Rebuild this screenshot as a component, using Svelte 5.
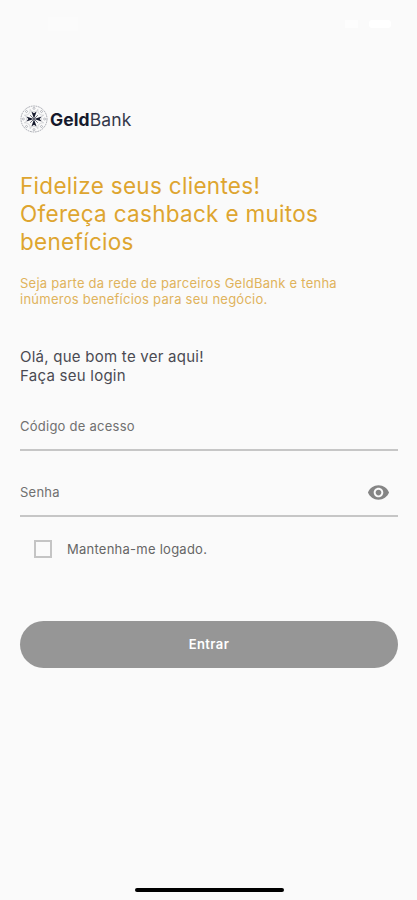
<script>
  let code = $state('');
  let password = $state('');
  let visible = $state(false);
  let remember = $state(false);
</script>

<main class="screen">
  <div class="status" aria-hidden="true">
    <span class="clock"></span>
    <span class="signals"><i class="wifi"></i><i class="battery"></i></span>
  </div>

  <header class="brand">
    <svg class="emblem" viewBox="0 0 28 28" aria-hidden="true">
      <g fill="none" stroke="#5a5f6c" stroke-width="0.5">
        <circle cx="14" cy="14" r="13" stroke-dasharray="1.8 0.7" />
        {#each [0, 45, 90, 135, 180, 225, 270, 315] as angle}
          <circle cx="14" cy="3.4" r="1" opacity="0.7" transform="rotate({angle} 14 14)" />
          <path d="M9.8 4.5Q14 9 18.2 4.5" opacity="0.4" transform="rotate({angle} 14 14)" />
        {/each}
      </g>
      <g fill="#15192c">
        {#each [0, 90, 180, 270] as angle}
          <path d="M14 13.8L11.4 6.4L14 8.3L16.6 6.4Z" transform="rotate({angle} 14 14)" />
        {/each}
      </g>
      <g stroke="#15192c" stroke-width="0.6">
        <path d="M10.2 10.2L17.8 17.8M17.8 10.2L10.2 17.8" />
      </g>
    </svg>
    <span class="name"><b>Geld</b>Bank</span>
  </header>

  <h1>Fidelize seus clientes!<br />Ofereça cashback e muitos<br />benefícios</h1>
  <p class="lead">Seja parte da rede de parceiros GeldBank e tenha<br />inúmeros benefícios para seu negócio.</p>
  <p class="greeting">Olá, que bom te ver aqui!<br />Faça seu login</p>

  <form onsubmit={(e) => e.preventDefault()}>
    <label class="field">
      <input placeholder="Código de acesso" bind:value={code} />
    </label>
    <div class="field second">
      <input type={visible ? 'text' : 'password'} placeholder="Senha" aria-label="Senha" bind:value={password} />
      <button type="button" class="eye" aria-label="Mostrar senha" onclick={() => (visible = !visible)}>
        <svg viewBox="0 0 24 24"><path fill="#858585" d="M12 4.5C7 4.5 2.73 7.61 1 12c1.73 4.39 6 7.5 11 7.5s9.27-3.11 11-7.5c-1.73-4.39-6-7.5-11-7.5zM12 17c-2.76 0-5-2.24-5-5s2.24-5 5-5 5 2.24 5 5-2.24 5-5 5zm0-8c-1.66 0-3 1.34-3 3s1.34 3 3 3 3-1.34 3-3-1.34-3-3-3z" /></svg>
      </button>
    </div>
    <label class="remember">
      <input type="checkbox" bind:checked={remember} />
      <span>Mantenha-me logado.</span>
    </label>
    <button class="submit">Entrar</button>
  </form>

  <div class="home"></div>
</main>

<style>
  :global(body) { background: #fafafa; }
  .screen {
    box-sizing: border-box;
    height: 900px;
    padding: 0 19px 0 20px;
    display: flex;
    flex-direction: column;
    background: #fafafa;
    font-family: Inter, "Liberation Sans", sans-serif;
    overflow: hidden;
  }
  .status {
    height: 48px;
    flex: none;
    display: flex;
    align-items: center;
    justify-content: space-between;
    padding: 0 7px 0 28px;
    box-sizing: border-box;
  }
  .clock { width: 30px; height: 14px; background: #fbfbfb; }
  .signals { display: flex; gap: 11px; }
  .signals i { height: 8px; background: #fdfdfd; }
  .signals .wifi { width: 13px; }
  .signals .battery { width: 22px; border-radius: 3px; background: #fff; }
  .brand {
    display: flex;
    align-items: center;
    height: 28px;
    margin-top: 57px;
  }
  .emblem { width: 28px; height: 28px; flex: none; }
  .name {
    margin: 1px 0 0 2px;
    font-size: 17.5px;
    line-height: 28px;
    letter-spacing: 0.1px;
    color: #34384a;
    font-weight: 400;
  }
  .name b { font-weight: 700; color: #15192c; }
  h1 {
    margin: 39px 0 0;
    font-size: 22.5px;
    line-height: 28.2px;
    font-weight: 400;
    letter-spacing: 0.3px;
    color: #dea52f;
    white-space: nowrap;
  }
  .lead {
    margin: 18px 0 0;
    font-size: 13px;
    line-height: 16.5px;
    letter-spacing: 0.25px;
    color: #e0b35c;
    white-space: nowrap;
  }
  .greeting {
    margin: 39px 0 0;
    font-size: 15px;
    line-height: 19px;
    letter-spacing: 0.25px;
    color: #4a4a52;
    white-space: nowrap;
  }
  form { display: flex; flex-direction: column; }
  .field {
    display: flex;
    align-items: center;
    box-sizing: border-box;
    height: 49px;
    margin-top: 17px;
    border-bottom: 2px solid #c6c6c6;
  }
  .field input {
    flex: 1;
    min-width: 0;
    padding: 2px 0 0;
    border: 0;
    outline: 0;
    background: none;
    font: 400 13px/20px Inter, "Liberation Sans", sans-serif;
    letter-spacing: 0.25px;
    color: #4a4a4a;
  }
  .field input::placeholder { color: #707070; opacity: 1; }
  .eye { padding: 3px 0 0; border: 0; background: none; margin-right: 8px; display: flex; }
  .eye svg { width: 23px; height: 23px; }
  .remember {
    display: flex;
    align-items: center;
    height: 20px;
    margin: 22px 0 0 14px;
    font-size: 13px;
    letter-spacing: 0.25px;
    color: #666;
  }
  .remember input {
    appearance: none;
    width: 18px;
    height: 18px;
    margin: 0 15px 0 0;
    border: 2px solid #c4c4c4;
    box-sizing: border-box;
  }
  .remember input:checked { background: #969696; }
  .submit {
    height: 47px;
    margin-top: 62px;
    border: 0;
    border-radius: 24px;
    background: #969696;
    color: #fff;
    font: 600 13px/20px Inter, "Liberation Sans", sans-serif;
    letter-spacing: 0.4px;
  }
  .home {
    width: 149px;
    height: 4px;
    margin: auto 0 8px 115px;
    border-radius: 2px;
    background: #000;
  }
</style>
